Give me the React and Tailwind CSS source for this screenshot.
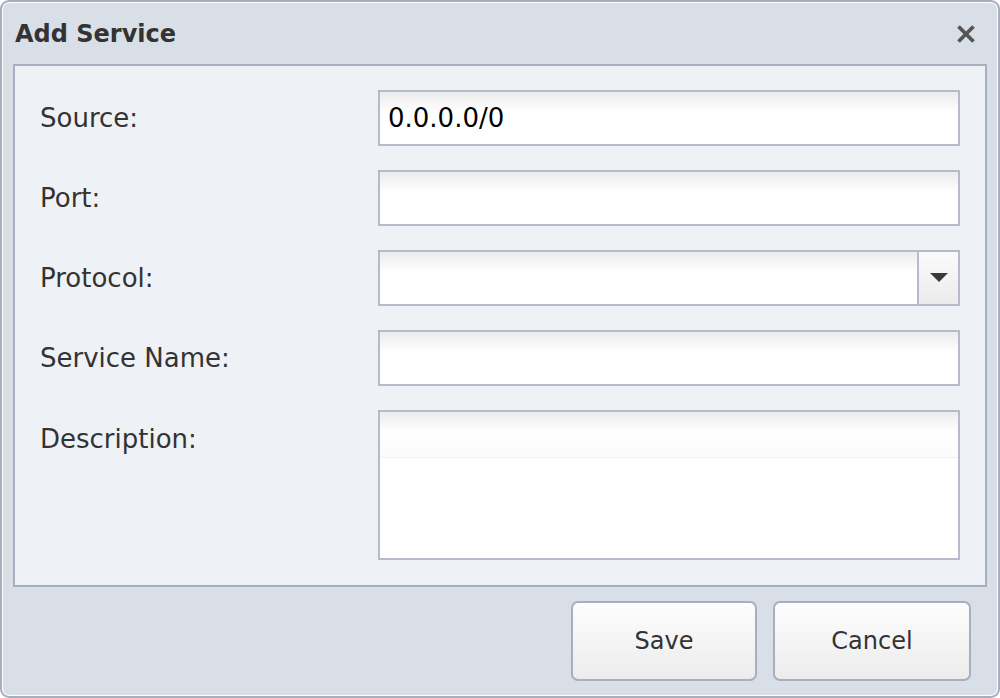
import React from "react";

const font = { fontFamily: '"DejaVu Sans", Verdana, sans-serif' };

function Field({ label, children, tall }) {
  return (
    <>
      <div className={`text-[26px] text-[#333] leading-none ${tall ? "pt-[16px]" : "flex items-center"}`}>{label}</div>
      {children}
    </>
  );
}

const inputCls =
  "h-[56px] w-full border-2 border-[#b6bacb] bg-[linear-gradient(to_bottom,#ececee,#ffffff_40%)] px-[8px] flex items-center text-[26px] text-black";

export default function App() {
  return (
    <div style={font} className="w-[1000px] h-[698px] bg-white">
      <div className="w-full h-full flex flex-col rounded-[9px] border-2 border-[#a9aebe] bg-[#d9dfe7] shadow-[inset_0_0_0_1px_#ffffff] overflow-hidden">
        <div className="h-[62px] shrink-0 flex items-center justify-between pl-[13px] pr-[22px]">
          <span className="text-[24px] font-bold text-[#333] leading-none mt-[2px]">Add Service</span>
          <svg width="20" height="20" viewBox="0 0 20 20" className="mt-[1px]">
            <path d="M2.5 2.5 L17.5 17.5 M17.5 2.5 L2.5 17.5" stroke="#555" strokeWidth="3.8" strokeLinecap="butt" />
          </svg>
        </div>
        <div className="mx-[11px] shrink-0 border-2 border-[#a9adc0] bg-[#eef2f6] px-[25px] pt-[24px] pb-[25px]">
          <div className="grid grid-cols-[338px_1fr] gap-y-[24px]">
            <Field label="Source:">
              <div className={inputCls}>0.0.0.0/0</div>
            </Field>
            <Field label="Port:">
              <div className={inputCls}></div>
            </Field>
            <Field label="Protocol:">
              <div className="h-[56px] w-full border-2 border-[#b6bacb] flex">
                <div className="flex-1 bg-[linear-gradient(to_bottom,#ececee,#ffffff_40%)]"></div>
                <div className="w-[41px] border-l-2 border-[#b6bacb] bg-[linear-gradient(to_bottom,#fbfbfb,#ebebeb)] flex items-center justify-center">
                  <svg width="18" height="10" viewBox="0 0 18 10">
                    <path d="M0 0 H18 L9 9 Z" fill="#3a3a3a" />
                  </svg>
                </div>
              </div>
            </Field>
            <Field label="Service Name:">
              <div className={inputCls}></div>
            </Field>
            <Field label="Description:" tall>
              <div className="h-[150px] w-full border-2 border-[#b6bacb] bg-white">
                <div className="h-[46px] bg-[linear-gradient(to_bottom,#ececee,#ffffff_45%,#fbfbfb)] border-b border-[#f2f2f2]"></div>
              </div>
            </Field>
          </div>
        </div>
        <div className="flex-1 flex justify-end gap-[16px] pt-[14px] pr-[27px]">
          <button className="w-[186px] h-[80px] rounded-[7px] border-2 border-[#a9aebe] bg-[linear-gradient(to_bottom,#fdfdfd,#ececec)] text-[24px] text-[#333]">Save</button>
          <button className="w-[198px] h-[80px] rounded-[7px] border-2 border-[#a9aebe] bg-[linear-gradient(to_bottom,#fdfdfd,#ececec)] text-[24px] text-[#333]">Cancel</button>
        </div>
      </div>
    </div>
  );
}
